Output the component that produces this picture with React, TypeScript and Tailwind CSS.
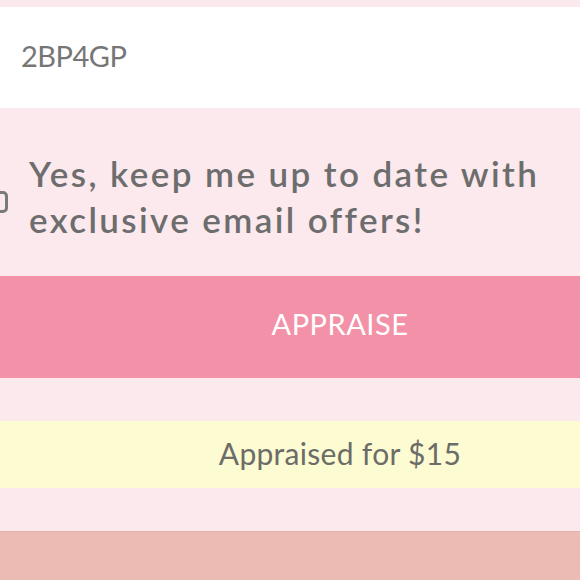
export default function App() {
  return (
    <div
      className="w-[580px] h-[580px] overflow-hidden flex flex-col bg-[#fbe9ed]"
      style={{ fontFamily: "Lato, 'Noto Sans', sans-serif" }}
    >
      <div className="h-[7px] shrink-0" />

      {/* Code input */}
      <div className="h-[101px] shrink-0 bg-white flex items-center pl-[21px]">
        <span className="text-[29px] text-[#767676] tracking-[-0.5px] -mt-[3px]">2BP4GP</span>
      </div>

      {/* Opt-in */}
      <div className="h-[168px] shrink-0 flex items-center relative">
        <div className="absolute left-[-14px] top-[83px] w-[22px] h-[22px] rounded-[5px] border-[3px] border-[#7a7a7a]" />
        <p className="pl-[29px] text-[35px] leading-[46px] font-semibold text-[#6d6d6d] tracking-[2.4px] mt-[8px]">
          Yes, keep me up to date with
          <br />
          exclusive email offers!
        </p>
      </div>

      {/* Button */}
      <button className="h-[102px] shrink-0 w-[680px] bg-[#f391a8] text-white text-[29px] tracking-[0.5px] flex items-center justify-center pb-[6px]">
        APPRAISE
      </button>

      <div className="h-[43px] shrink-0" />

      {/* Result */}
      <div className="h-[67px] shrink-0 w-[680px] bg-[#fdfbd1] flex items-center justify-center">
        <span className="text-[30px] text-[#6c6c68] tracking-[0.3px] -mt-[2px]">Appraised for $15</span>
      </div>

      <div className="h-[43px] shrink-0" />

      <div className="flex-1 bg-[#ecbcb4] border-t border-[#e6b2aa]" />
    </div>
  );
}
